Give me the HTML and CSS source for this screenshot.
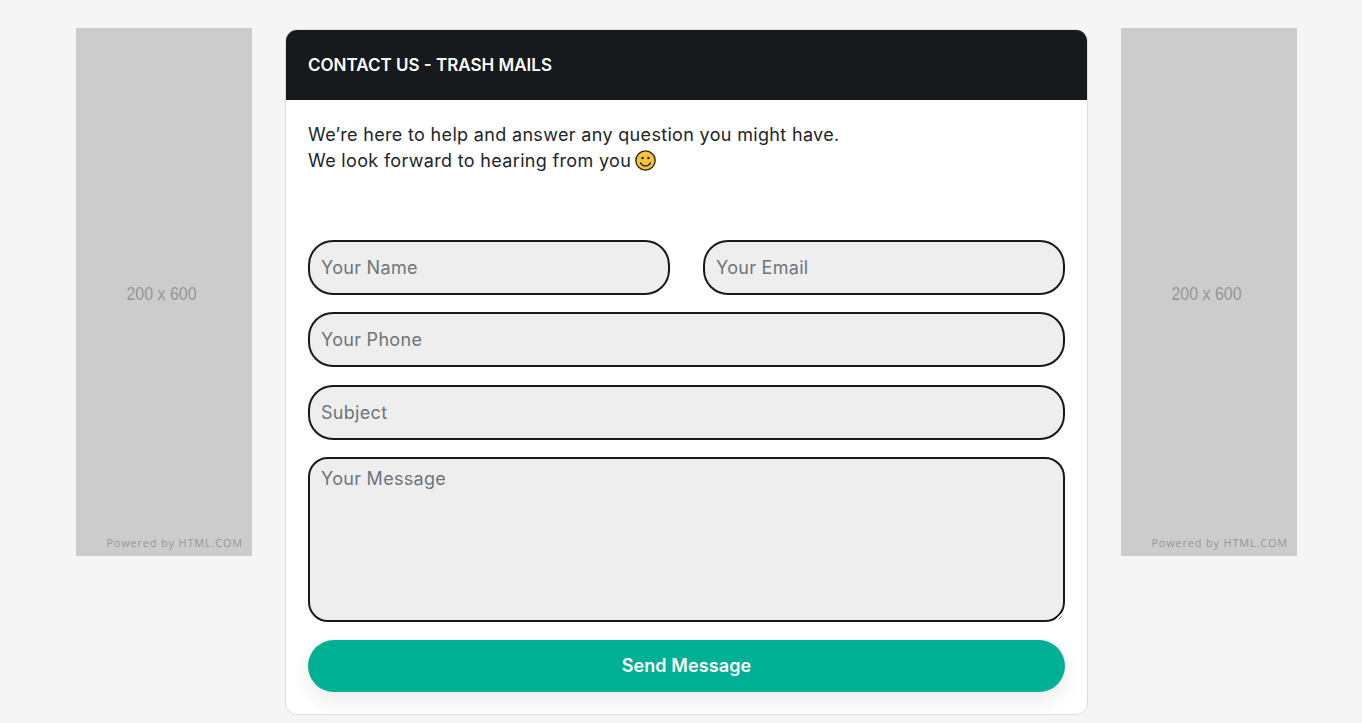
FILE: index.html
```html
<!DOCTYPE html>
<html lang="en">
<head>
    <meta charset="UTF-8">
    <meta name="viewport" content="width=device-width, initial-scale=1.0">
    <title>Contact Us - Trash Mails</title>
    <link rel="stylesheet" href="styles.css">
</head>
<body>
    <div class="page">
        <aside class="ad">
            <span class="ad-size">200 x 600</span>
            <span class="ad-credit">Powered by HTML.COM</span>
        </aside>

        <main class="card">
            <div class="card-header">
                <h1>Contact Us - Trash Mails</h1>
            </div>
            <div class="card-body">
                <p class="intro">
                    We’re here to help and answer any question you might have.<br>
                    We look forward to hearing from you
                    <svg class="smiley" viewBox="0 0 20 20" aria-hidden="true">
                        <circle cx="10" cy="10" r="9.2" fill="#f7c23c" stroke="#2b2412" stroke-width="1.300"/>
                        <circle cx="7.200" cy="7.600" r="1.200" fill="#2b2412"/>
                        <circle cx="12.800" cy="7.600" r="1.200" fill="#2b2412"/>
                        <path d="M5.200 12.200c1.200 2 2.900 3 4.800 3s3.600-1 4.800-3" fill="none" stroke="#2b2412" stroke-width="1.200" stroke-linecap="round"/>
                    </svg>
                </p>
                <form class="contact-form">
                    <div class="form-row">
                        <input type="text" placeholder="Your Name">
                        <input type="email" placeholder="Your Email">
                    </div>
                    <input type="text" placeholder="Your Phone">
                    <input type="text" placeholder="Subject">
                    <textarea placeholder="Your Message"></textarea>
                    <button type="submit">Send Message</button>
                </form>
            </div>
        </main>

        <aside class="ad">
            <span class="ad-size">200 x 600</span>
            <span class="ad-credit">Powered by HTML.COM</span>
        </aside>
    </div>
</body>
</html>
```

FILE: styles.css
```css
* {
    box-sizing: border-box;
}
html, body {
    height: 723px;
    overflow: hidden;
}
body {
    background-color: #f5f5f5;
    color: #212529;
    font-family: 'Inter', 'Noto Sans', sans-serif;
    margin: 0;
}
.page {
    display: flex;
    align-items: flex-start;
    gap: 33px;
    padding: 28px 65px 0 76px;
}
.ad {
    background-color: #cccccc;
    display: flex;
    flex-direction: column;
    flex: 0 0 176px;
    height: 528px;
    padding: 256px 9px 7px 0;
    color: #969696;
}
.ad-size {
    font-family: 'Liberation Sans', sans-serif;
    font-size: 19px;
    line-height: 20px;
    margin-left: 4px;
    text-align: center;
    transform: scaleX(0.84);
}
.ad-credit {
    font-family: 'Open Sans', sans-serif;
    font-size: 11px;
    letter-spacing: 0.8px;
    line-height: 13px;
    margin-top: auto;
    text-align: right;
}
.card {
    background-color: #fff;
    border: 1px solid #dddddd;
    border-radius: 12px;
    flex: 0 0 803px;
    height: 686px;
    margin-top: 1px;
    overflow: hidden;
}
.card-header {
    background-color: #161a1d;
    display: flex;
    align-items: center;
    height: 70px;
    padding: 0 22px;
}
h1 {
    color: #fff;
    font-size: 17px;
    font-weight: 600;
    margin: 0;
    text-transform: uppercase;
}
.card-body {
    padding: 22px 22px 0;
}
.intro {
    font-size: 18px;
    letter-spacing: 0.33px;
    line-height: 26px;
    margin: 0 0 66px;
}
.smiley {
    height: 21px;
    width: 21px;
    margin-left: -2px;
    vertical-align: -4px;
}
.contact-form {
    display: flex;
    flex-direction: column;
    gap: 17.6px;
}
.form-row {
    display: flex;
    gap: 33px;
}
.form-row input {
    flex: 1;
    min-width: 0;
}
input, textarea {
    background-color: #eeeeee;
    border: 2px solid #16191c;
    border-radius: 25px;
    color: #212529;
    font-family: inherit;
    font-size: 18px;
    height: 54.8px;
    letter-spacing: 0.3px;
    padding: 0 11px;
    width: 100%;
}
textarea {
    border-radius: 20px;
    display: block;
    height: 165px;
    padding: 9px 11px;
}
input::placeholder, textarea::placeholder {
    color: #6c757d;
    opacity: 1;
}
button {
    background-color: #00b094;
    border: none;
    border-radius: 26px;
    box-shadow: 0 10px 20px rgba(0, 0, 0, 0.08);
    color: #fff;
    cursor: pointer;
    font-family: inherit;
    font-size: 18px;
    font-weight: 600;
    height: 52px;
    letter-spacing: 0.1px;
}
```
